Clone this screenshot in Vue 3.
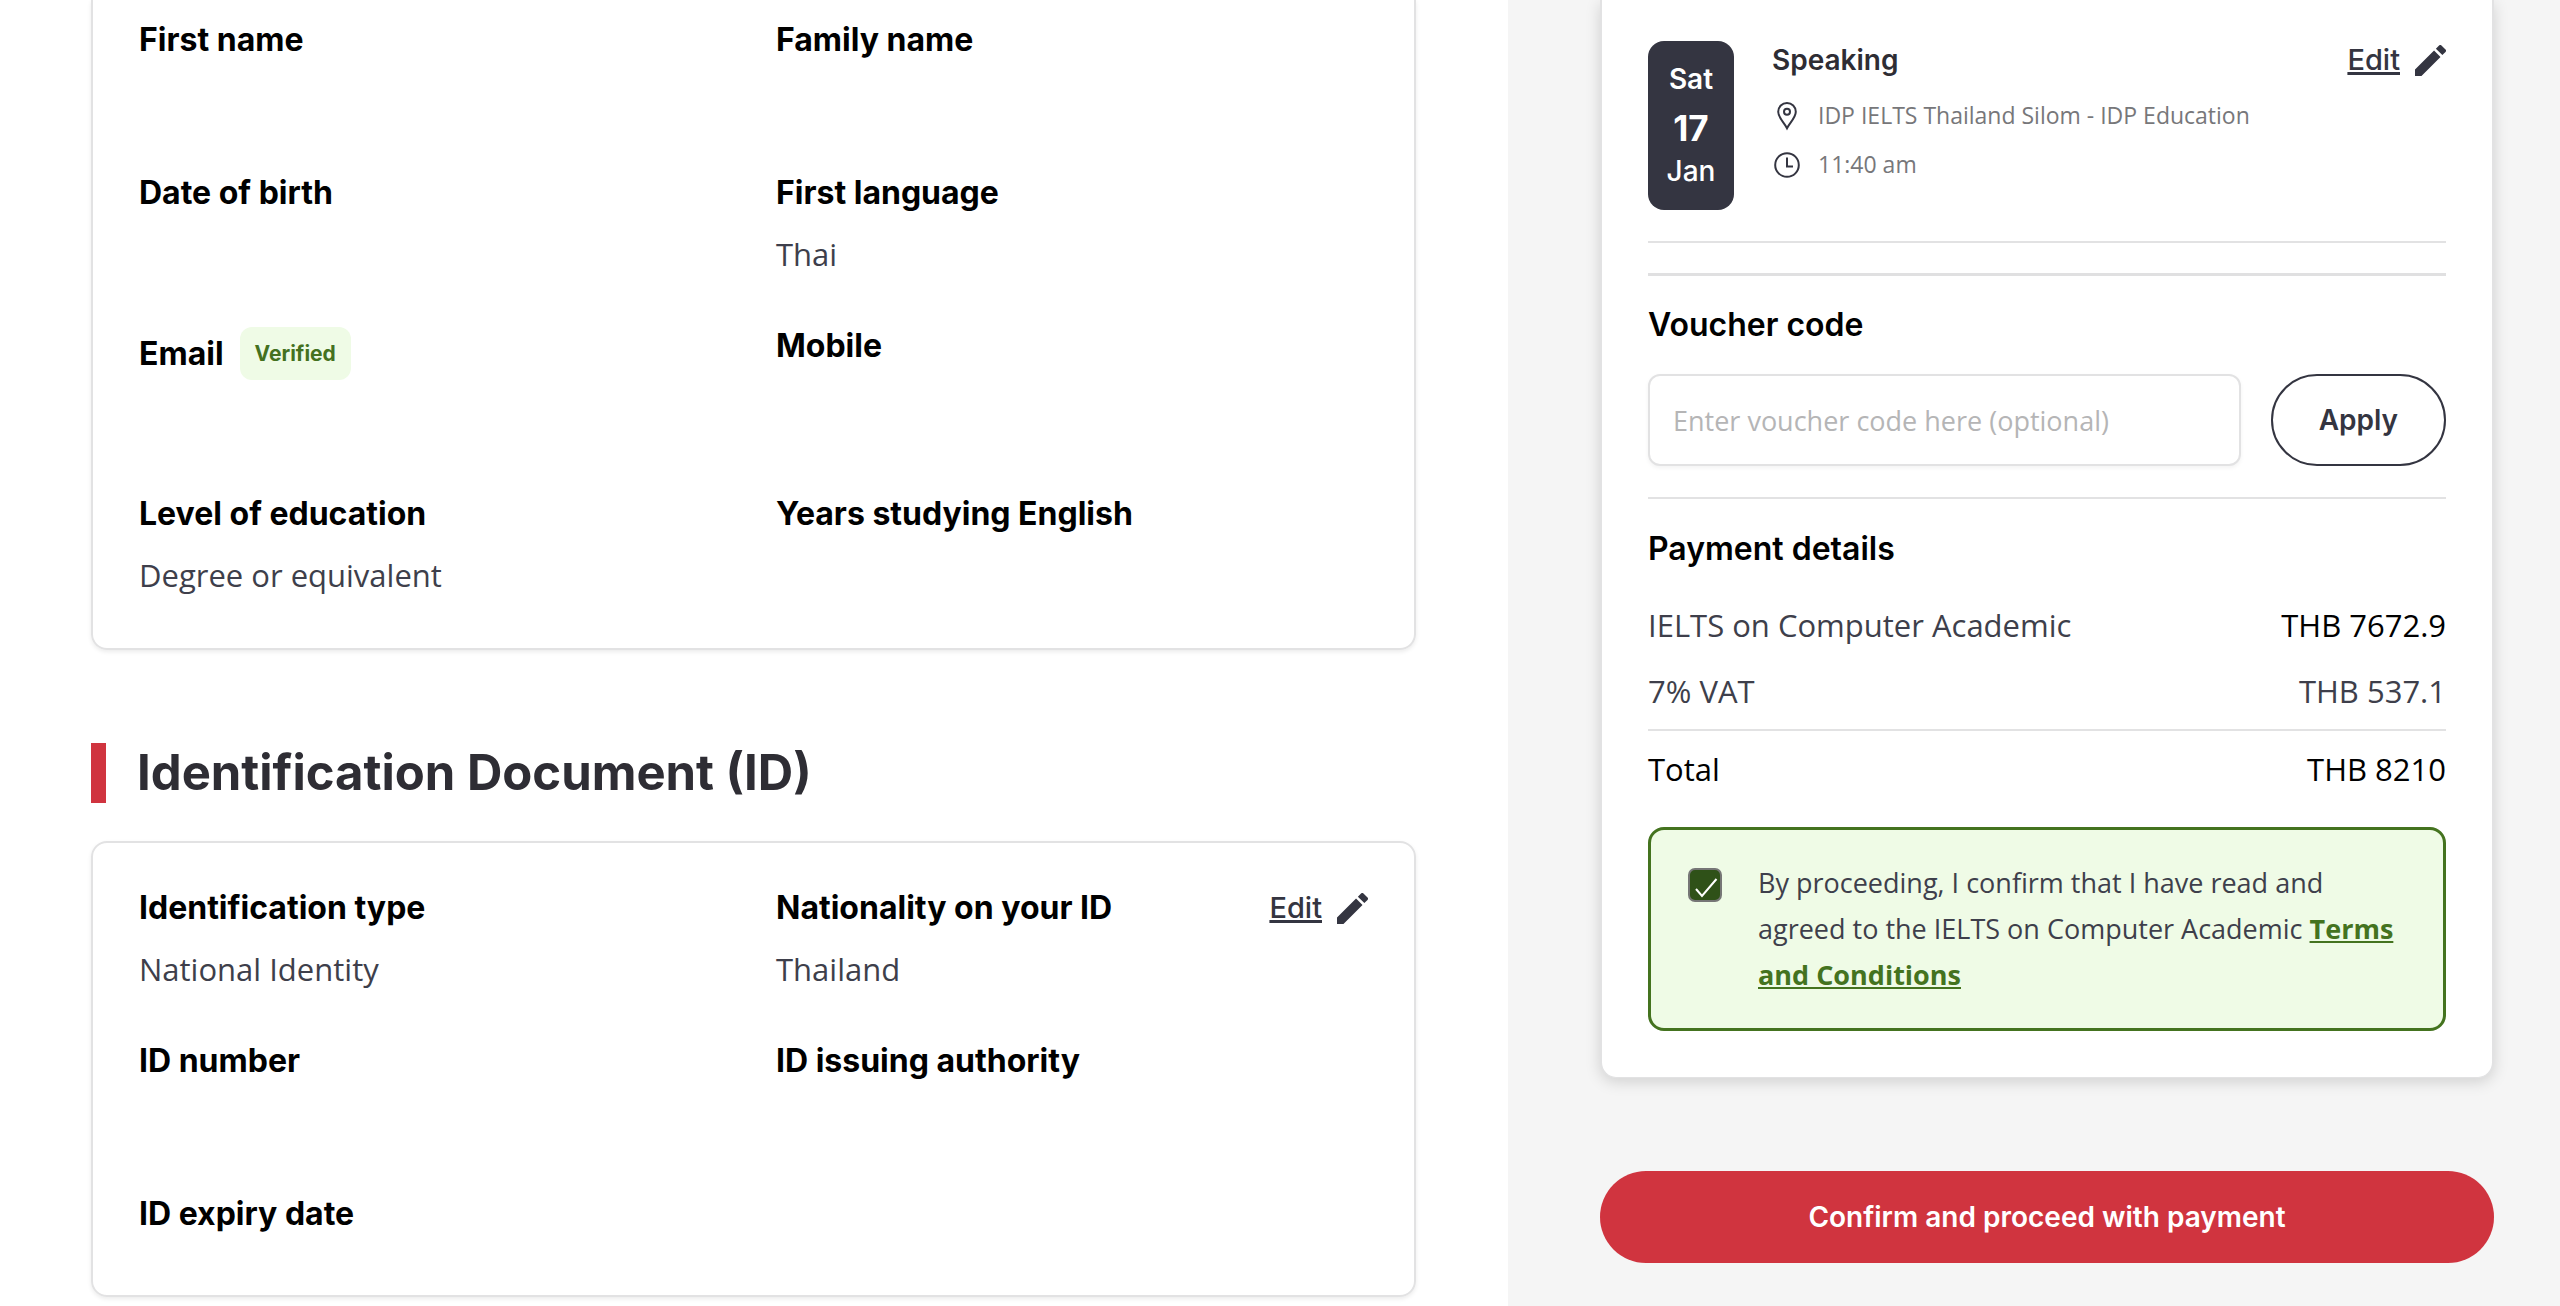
<script setup>
import { ref } from 'vue';

const voucherCode = ref('');
const agreed = ref(true);

const personalDetails = [
  { label: 'First name', value: '' },
  { label: 'Family name', value: '' },
  { label: 'Date of birth', value: '' },
  { label: 'First language', value: 'Thai' },
  { label: 'Email', value: '', badge: 'Verified' },
  { label: 'Mobile', value: '' },
  { label: 'Level of education', value: 'Degree or equivalent' },
  { label: 'Years studying English', value: '' }
];

const identification = [
  { label: 'Identification type', value: 'National Identity' },
  { label: 'Nationality on your ID', value: 'Thailand', editable: true },
  { label: 'ID number', value: '' },
  { label: 'ID issuing authority', value: '' },
  { label: 'ID expiry date' }
];

const charges = [
  { name: 'IELTS on Computer Academic', amount: 'THB 7672.9', strong: true },
  { name: '7% VAT', amount: 'THB 537.1' }
];
</script>

<template>
  <div class="page">
    <main class="details">
      <section class="card card-continued">
        <dl class="fields">
          <div v-for="field in personalDetails" :key="field.label" class="field">
            <dt>
              {{ field.label }}
              <span v-if="field.badge" class="badge">{{ field.badge }}</span>
            </dt>
            <dd>{{ field.value }}</dd>
          </div>
        </dl>
      </section>

      <h2 class="section-title">Identification Document (ID)</h2>

      <section class="card">
        <dl class="fields">
          <div v-for="field in identification" :key="field.label" class="field">
            <dt>
              {{ field.label }}
              <a v-if="field.editable" href="#" class="edit">
                <span>Edit</span>
                <svg viewBox="3 3 18 18" aria-hidden="true">
                  <path d="M3 17.25V21h3.75L17.81 9.94l-3.75-3.75L3 17.25zM20.71 7.04a1 1 0 0 0 0-1.41l-2.34-2.34a1 1 0 0 0-1.41 0l-1.83 1.83 3.75 3.75 1.83-1.83z" />
                </svg>
              </a>
            </dt>
            <dd v-if="field.value !== undefined">{{ field.value }}</dd>
          </div>
        </dl>
      </section>
    </main>

    <aside class="summary">
      <div class="summary-card">
        <div class="test">
          <div class="date">
            <span class="date-name">Sat</span>
            <span class="date-day">17</span>
            <span class="date-month">Jan</span>
          </div>
          <div class="test-info">
            <div class="test-head">
              <h3>Speaking</h3>
              <a href="#" class="edit">
                <span>Edit</span>
                <svg viewBox="3 3 18 18" aria-hidden="true">
                  <path d="M3 17.25V21h3.75L17.81 9.94l-3.75-3.75L3 17.25zM20.71 7.04a1 1 0 0 0 0-1.41l-2.34-2.34a1 1 0 0 0-1.41 0l-1.83 1.83 3.75 3.75 1.83-1.83z" />
                </svg>
              </a>
            </div>
            <p class="meta">
              <svg viewBox="0 0 30 30" aria-hidden="true">
                <path d="M15 27.2C12.500 22 6.200 16.800 6.200 10.800a8.800 8.800 0 0 1 17.600 0C23.800 16.800 17.500 22 15 27.200z" />
                <circle cx="15" cy="10.800" r="3" />
              </svg>
              IDP IELTS Thailand Silom - IDP Education
            </p>
            <p class="meta">
              <svg viewBox="0 0 30 30" aria-hidden="true">
                <circle cx="15" cy="15" r="11.800" />
                <path d="M15 7.500v9h6" />
              </svg>
              11:40 am
            </p>
          </div>
        </div>

        <form class="voucher" @submit.prevent>
          <label for="voucher" class="block-title">Voucher code</label>
          <div class="voucher-row">
            <input id="voucher" v-model="voucherCode" type="text" placeholder="Enter voucher code here (optional)" />
            <button type="submit" class="apply">Apply</button>
          </div>
        </form>

        <section class="payment">
          <h3 class="block-title">Payment details</h3>
          <table>
            <tbody>
              <tr v-for="charge in charges" :key="charge.name">
                <th scope="row">{{ charge.name }}</th>
                <td :class="{ strong: charge.strong }">{{ charge.amount }}</td>
              </tr>
            </tbody>
            <tfoot>
              <tr>
                <th scope="row">Total</th>
                <td>THB 8210</td>
              </tr>
            </tfoot>
          </table>
        </section>

        <div class="consent">
          <input id="agree" v-model="agreed" type="checkbox" />
          <label for="agree">
            By proceeding, I confirm that I have read and agreed to the IELTS on Computer Academic
            <a href="#">Terms and Conditions</a>
          </label>
        </div>
      </div>

      <button type="button" class="confirm">Confirm and proceed with payment</button>
    </aside>
  </div>
</template>

<style>
body {
  margin: 0;
  background: #fff;
}
</style>

<style scoped>
.page {
  display: grid;
  grid-template-columns: 377fr 263fr;
  min-height: 100vh;
  font-family: 'Open Sans', 'Noto Sans', sans-serif;
  font-size: 31px;
  line-height: 46px;
  color: #3e3f4b;
}

.page * {
  box-sizing: border-box;
}

h2,
h3,
p,
dl,
dd {
  margin: 0;
}

.details {
  padding: 0 92px 0 91px;
}

.card {
  padding: 46px;
  border: 2px solid #e2e2e3;
  border-radius: 16px;
  box-shadow: 0 2px 4px rgba(0, 0, 0, 0.08);
}

/* the upper edge of this card is scrolled out of view */
.card-continued {
  padding-top: 21px;
  border-top: 0;
  border-radius: 0 0 16px 16px;
}

.fields {
  display: grid;
  grid-template-columns: 1fr 1fr;
  gap: 46px 45px;
}

.field dt {
  display: flex;
  align-items: center;
  gap: 16px;
  margin-bottom: 16px;
  font-family: Inter, 'Open Sans', sans-serif;
  font-size: 32px;
  font-weight: 700;
  line-height: 38px;
  color: #000;
}

.field dd {
  min-height: 53px;
  line-height: 53px;
}

.badge {
  padding: 0 15px;
  border-radius: 12px;
  background: #effbe6;
  font-size: 21px;
  line-height: 53px;
  color: #44711f;
}

.edit {
  display: flex;
  align-items: center;
  gap: 15px;
  margin-left: auto;
  font-family: Inter, 'Open Sans', sans-serif;
  font-size: 29px;
  font-weight: 500;
  line-height: 38px;
  color: #343541;
  text-decoration: none;
}

.edit span {
  text-decoration: underline;
  text-decoration-thickness: 3px;
}

.edit svg {
  width: 31px;
  height: 31px;
  fill: #343541;
}

.section-title {
  margin: 93px 0 38px;
  padding-left: 31px;
  border-left: 15px solid #d0343f;
  font-family: Inter, 'Open Sans', sans-serif;
  font-size: 49px;
  font-weight: 700;
  line-height: 60px;
  color: #2e2d34;
}

.summary {
  padding: 0 66px 0 92px;
  background: #f5f5f5;
}

.summary-card {
  padding: 41px 46px 46px;
  border: solid #e2e2e3;
  border-width: 0 2px 1px;
  border-radius: 0 0 16px 16px;
  background: #fff;
  box-shadow: 0 4px 15px rgba(0, 0, 0, 0.15);
}

.test {
  display: flex;
  gap: 38px;
  padding-bottom: 31px;
  border-bottom: 2px solid #e2e2e3;
}

.date {
  display: flex;
  flex-direction: column;
  align-items: center;
  width: 86px;
  height: 169px;
  padding-top: 15px;
  border-radius: 16px;
  background: #343541;
  font-family: Inter, 'Open Sans', sans-serif;
  font-size: 28px;
  line-height: 46px;
  color: #fff;
}

.date-name {
  font-weight: 600;
}

.date-day {
  font-size: 35px;
  font-weight: 700;
  line-height: 52px;
}

.date-month {
  font-weight: 500;
  line-height: 34px;
}

.test-info {
  flex: 1;
}

.test-head {
  display: flex;
  align-items: center;
  margin-bottom: 12px;
}

.test-head h3 {
  font-family: Inter, 'Open Sans', sans-serif;
  font-size: 28px;
  font-weight: 600;
  line-height: 38px;
  color: #2e2d34;
}

.meta {
  display: flex;
  align-items: center;
  gap: 16px;
  font-size: 23px;
  line-height: 49px;
  color: #77777a;
}

.meta svg {
  width: 30px;
  height: 30px;
  fill: none;
  stroke: #343541;
  stroke-width: 2;
}

.block-title {
  display: block;
  font-family: Inter, 'Open Sans', sans-serif;
  font-size: 32px;
  font-weight: 600;
  line-height: 38px;
  color: #000;
}

.voucher {
  margin-top: 30px;
  padding: 30px 0 31px;
  border-top: 3px solid #e0e0e1;
  border-bottom: 2px solid #e2e2e3;
}

.voucher-row {
  display: flex;
  gap: 30px;
  margin-top: 30px;
}

.voucher input {
  flex: 1;
  min-width: 0;
  height: 92px;
  padding: 0 23px;
  border: 2px solid #e2e2e3;
  border-radius: 12px;
  background: #fff;
  font-family: inherit;
  font-size: 27px;
  color: #3e3f4b;
  box-shadow: 0 2px 4px rgba(0, 0, 0, 0.05);
}

.voucher input::placeholder {
  color: #b5b5b6;
}

.apply,
.confirm {
  height: 92px;
  border-radius: 46px;
  font-family: Inter, 'Open Sans', sans-serif;
  font-size: 28px;
  font-weight: 600;
  cursor: pointer;
}

.apply {
  padding: 0 46px;
  border: 2px solid #343541;
  background: #fff;
  color: #343541;
}

.payment {
  padding: 31px 0 20px;
}

.payment table {
  width: 100%;
  margin-top: 24px;
  border-collapse: collapse;
}

.payment th,
.payment td {
  padding: 10px 0;
  font-weight: 400;
  text-align: left;
}

.payment td {
  text-align: right;
}

.payment tbody tr:last-child > * {
  padding-bottom: 15px;
}

.payment tfoot tr > * {
  padding: 15px 0;
  border-top: 2px solid #e2e2e3;
  color: #000;
}

.payment .strong {
  color: #000;
}

.consent {
  display: flex;
  align-items: flex-start;
  gap: 36px;
  padding: 30px 37px;
  border: 3px solid #44731f;
  border-radius: 16px;
  background: #effbe6;
  font-size: 27px;
}

.consent input {
  flex: none;
  appearance: none;
  width: 34px;
  height: 34px;
  margin: 8px 0 0;
  border: 2px solid #767676;
  border-radius: 7px;
  background: #2f5118 url("data:image/svg+xml,%3Csvg xmlns='http://www.w3.org/2000/svg' viewBox='0 0 30 30'%3E%3Cpath d='M6 19l6 7L26.500 9' fill='none' stroke='white' stroke-width='2'/%3E%3C/svg%3E") center / 100% no-repeat;
}

.consent a {
  font-weight: 700;
  color: #44731f;
}

.confirm {
  display: block;
  width: 100%;
  margin-top: 93px;
  border: 0;
  background: #d0343f;
  color: #fff;
}
</style>
